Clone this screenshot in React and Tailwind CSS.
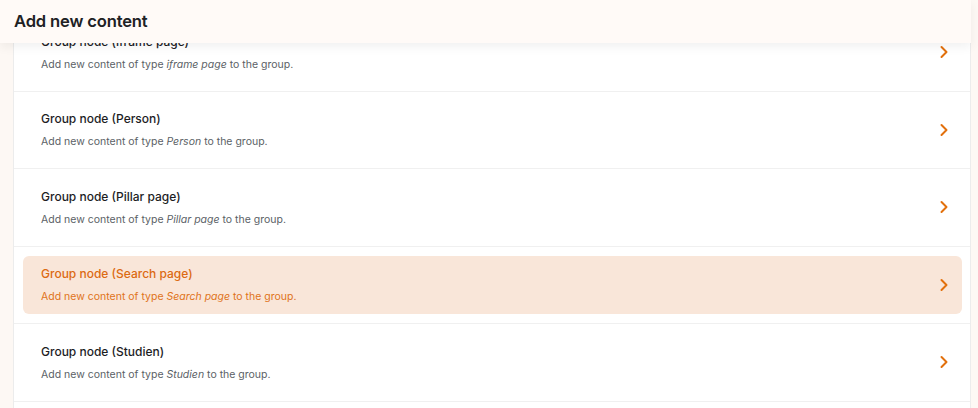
import React from 'react';
import { ChevronRight } from 'lucide-react';

const items = [
  { name: 'iframe page' },
  { name: 'Person' },
  { name: 'Pillar page' },
  { name: 'Search page', active: true },
  { name: 'Studien' },
];

export default function App() {
  return (
    <div className="relative flex h-[408px] w-[978px] flex-col overflow-hidden bg-[#fdf8f4] font-['Inter',sans-serif]">
      {/* Sticky header */}
      <header className="absolute left-0 top-0 z-10 flex h-[43px] w-[971px] items-center bg-[#fffaf7] pb-[1px] pl-[14px] shadow-[0_4px_10px_rgba(0,0,0,0.06)]">
        <h1 className="text-[16.6px] font-semibold tracking-[-0.01em] text-[#202124]">Add new content</h1>
      </header>

      <div className="flex w-[971px] flex-1 flex-col pl-[13px] pt-[14px]">
        <ul className="flex-1 border-x border-[#ececec] bg-white">
          {items.map((item) => (
            <li key={item.name} className="border-b border-[#f0f0f0] pl-[9px] pr-[8px] py-[9.25px]">
              <div
                className={
                  'flex h-[58px] items-center justify-between rounded-[6px] pl-[18px] pr-[8px] ' +
                  (item.active ? 'bg-[#f9e6d9]' : 'bg-white')
                }
              >
                <div className="flex flex-col">
                  <span
                    className={
                      'text-[12px] font-medium leading-[20px] ' +
                      (item.active ? 'text-[#dc6a12]' : 'text-[#1d1d1f]')
                    }
                  >
                    Group node ({item.name})
                  </span>
                  <span
                    className={
                      'mt-[5px] text-[10.5px] leading-[16px] ' +
                      (item.active ? 'text-[#e0731a]' : 'text-[#5b5f66]')
                    }
                  >
                    Add new content of type <em>{item.name}</em> to the group.
                  </span>
                </div>
                <ChevronRight size={20} strokeWidth={2.4} className="text-[#e2700c]" />
              </div>
            </li>
          ))}
        </ul>
      </div>
    </div>
  );
}
